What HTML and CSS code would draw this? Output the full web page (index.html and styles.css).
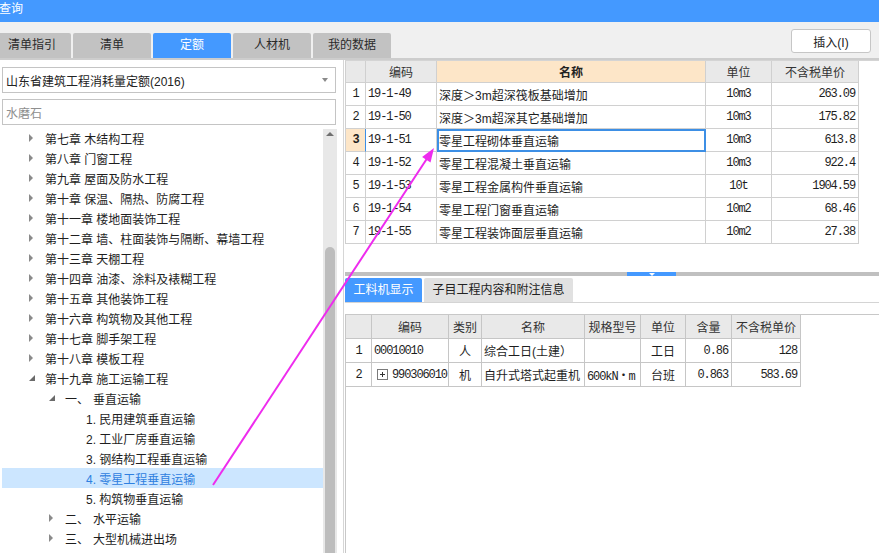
FILE: index.html
```html
<!DOCTYPE html>
<html lang="zh-CN">
<head>
<meta charset="utf-8">
<title>查询</title>
<link rel="stylesheet" href="styles.css">
</head>
<body>
<div class="app">
  <div class="titlebar">查询</div>
  <div class="toolbar">
    <div class="tabs">
      <div class="tab">清单指引</div>
      <div class="tab">清单</div>
      <div class="tab active">定额</div>
      <div class="tab">人材机</div>
      <div class="tab">我的数据</div>
    </div>
    <button class="btn-insert">插入(I)</button>
  </div>
  <div class="main">
    <aside class="left">
      <div class="select"><span>山东省建筑工程消耗量定额(2016)</span><i class="caret"></i></div>
      <div class="search"><span class="placeholder">水磨石</span></div>
      <div class="tree-wrap">
        <div class="tree">
          <div class="node l0"><i class="tg closed"></i><span>第七章 木结构工程</span></div>
          <div class="node l0"><i class="tg closed"></i><span>第八章 门窗工程</span></div>
          <div class="node l0"><i class="tg closed"></i><span>第九章 屋面及防水工程</span></div>
          <div class="node l0"><i class="tg closed"></i><span>第十章 保温、隔热、防腐工程</span></div>
          <div class="node l0"><i class="tg closed"></i><span>第十一章 楼地面装饰工程</span></div>
          <div class="node l0"><i class="tg closed"></i><span>第十二章 墙、柱面装饰与隔断、幕墙工程</span></div>
          <div class="node l0"><i class="tg closed"></i><span>第十三章 天棚工程</span></div>
          <div class="node l0"><i class="tg closed"></i><span>第十四章 油漆、涂料及裱糊工程</span></div>
          <div class="node l0"><i class="tg closed"></i><span>第十五章 其他装饰工程</span></div>
          <div class="node l0"><i class="tg closed"></i><span>第十六章 构筑物及其他工程</span></div>
          <div class="node l0"><i class="tg closed"></i><span>第十七章 脚手架工程</span></div>
          <div class="node l0"><i class="tg closed"></i><span>第十八章 模板工程</span></div>
          <div class="node l0"><i class="tg open"></i><span>第十九章 施工运输工程</span></div>
          <div class="node l1"><i class="tg open"></i><span>一、</span><span class="gap">垂直运输</span></div>
          <div class="node l2"><span>1. 民用建筑垂直运输</span></div>
          <div class="node l2"><span>2. 工业厂房垂直运输</span></div>
          <div class="node l2"><span>3. 钢结构工程垂直运输</span></div>
          <div class="node l2 selected"><span>4. 零星工程垂直运输</span></div>
          <div class="node l2"><span>5. 构筑物垂直运输</span></div>
          <div class="node l1"><i class="tg closed"></i><span>二、</span><span class="gap">水平运输</span></div>
          <div class="node l1"><i class="tg closed"></i><span>三、</span><span class="gap">大型机械进出场</span></div>
        </div>
        <div class="vscroll">
          <div class="sb-up"><i></i></div>
          <div class="sb-thumb"></div>
        </div>
      </div>
    </aside>
    <div class="divider"></div>
    <section class="right">
      <div class="grid-top">
        <div class="tgrid">
          <div class="c h"></div>
          <div class="c h">编码</div>
          <div class="c h hl">名称</div>
          <div class="c h">单位</div>
          <div class="c h">不含税单价</div>

          <div class="c ctr mono">1</div>
          <div class="c mono">19-1-49</div>
          <div class="c">深度＞3m超深筏板基础增加</div>
          <div class="c ctr mono">10m3</div>
          <div class="c rt mono">263.09</div>

          <div class="c ctr mono">2</div>
          <div class="c mono">19-1-50</div>
          <div class="c">深度＞3m超深其它基础增加</div>
          <div class="c ctr mono">10m3</div>
          <div class="c rt mono">175.82</div>

          <div class="c ctr mono cur-num">3</div>
          <div class="c mono">19-1-51</div>
          <div class="c cur-cell">零星工程砌体垂直运输</div>
          <div class="c ctr mono">10m3</div>
          <div class="c rt mono">613.8</div>

          <div class="c ctr mono">4</div>
          <div class="c mono">19-1-52</div>
          <div class="c">零星工程混凝土垂直运输</div>
          <div class="c ctr mono">10m3</div>
          <div class="c rt mono">922.4</div>

          <div class="c ctr mono">5</div>
          <div class="c mono">19-1-53</div>
          <div class="c">零星工程金属构件垂直运输</div>
          <div class="c ctr mono">10t</div>
          <div class="c rt mono">1904.59</div>

          <div class="c ctr mono">6</div>
          <div class="c mono">19-1-54</div>
          <div class="c">零星工程门窗垂直运输</div>
          <div class="c ctr mono">10m2</div>
          <div class="c rt mono">68.46</div>

          <div class="c ctr mono">7</div>
          <div class="c mono">19-1-55</div>
          <div class="c">零星工程装饰面层垂直运输</div>
          <div class="c ctr mono">10m2</div>
          <div class="c rt mono">27.38</div>
        </div>
      </div>
      <div class="splitter"><div class="split-handle"><i></i></div></div>
      <div class="subtabs">
        <div class="subtab active">工料机显示</div>
        <div class="subtab">子目工程内容和附注信息</div>
      </div>
      <div class="grid-bottom">
        <div class="bgrid">
          <div class="c h"></div>
          <div class="c h">编码</div>
          <div class="c h">类别</div>
          <div class="c h">名称</div>
          <div class="c h">规格型号</div>
          <div class="c h">单位</div>
          <div class="c h">含量</div>
          <div class="c h">不含税单价</div>

          <div class="c ctr mono">1</div>
          <div class="c mono">00010010</div>
          <div class="c ctr">人</div>
          <div class="c">综合工日(土建）</div>
          <div class="c"></div>
          <div class="c ctr">工日</div>
          <div class="c rt mono">0.86</div>
          <div class="c rt mono">128</div>

          <div class="c ctr mono">2</div>
          <div class="c mono"><svg class="plus" width="11" height="11" viewBox="0 0 11 11"><rect x="0.5" y="0.5" width="10" height="10" fill="#fff" stroke="#7a7a7a"/><path d="M3 5.5h5M5.5 3v5" stroke="#333" stroke-width="1"/></svg><span>990306010</span></div>
          <div class="c ctr">机</div>
          <div class="c">自升式塔式起重机</div>
          <div class="c mono">600kN・m</div>
          <div class="c ctr">台班</div>
          <div class="c rt mono">0.863</div>
          <div class="c rt mono">583.69</div>
        </div>
      </div>
    </section>
  </div>
  <svg class="annot" width="879" height="553" viewBox="0 0 879 553">
    <line x1="213" y1="485" x2="428" y2="157" stroke="#ee2cee" stroke-width="2"/>
    <polygon points="434,148 430.5,162.4 422.1,157" fill="#ee2cee"/>
  </svg>
</div>
</body>
</html>
```

FILE: styles.css
```css
html, body {
  margin: 0;
  padding: 0;
}
body {
  font-family: "Liberation Sans", "Noto Sans CJK SC", sans-serif;
  font-size: 12px;
  color: #222;
  background: #fff;
}
.app {
  position: relative;
  width: 879px;
  height: 553px;
  overflow: hidden;
  display: flex;
  flex-direction: column;
}

/* title bar */
.titlebar {
  height: 22px;
  line-height: 19px;
  background: #4499ff;
  color: #fff;
  font-size: 12px;
  text-indent: -1px;
  flex: none;
}

/* toolbar / tabs */
.toolbar {
  height: 36px;
  flex: none;
  background: #f0f0f0;
  border-bottom: 2px solid #cdcdcd;
  display: flex;
  align-items: flex-end;
  justify-content: space-between;
}
.tabs {
  display: flex;
  gap: 2px;
  margin-left: -7px;
}
.tab {
  width: 78px;
  height: 25px;
  line-height: 25px;
  text-align: center;
  background: #c2c2c2;
  color: #2a2a2a;
  border-radius: 2px 2px 0 0;
}
.tab.active {
  background: #4499ff;
  color: #fff;
}
.btn-insert {
  align-self: flex-start;
  margin: 7px 8px 0 0;
  width: 80px;
  height: 24px;
  padding: 0;
  font-family: inherit;
  font-size: 12px;
  color: #222;
  background: #fff;
  border: 1px solid #c6c6c6;
  border-radius: 3px;
}

/* main */
.main {
  flex: 1;
  display: flex;
  min-height: 0;
}
.left {
  width: 343px;
  flex: none;
  display: flex;
  flex-direction: column;
  background: #fff;
}
.select, .search {
  box-sizing: border-box;
  width: 334px;
  height: 26px;
  margin-left: 2px;
  border: 1px solid #c4c4c4;
  display: flex;
  align-items: center;
  padding: 0 4px 0 3px;
  flex: none;
}
.select {
  margin-top: 7px;
  justify-content: space-between;
}
.caret {
  width: 0;
  height: 0;
  border-top: 4px solid #8a8a8a;
  border-left: 3px solid transparent;
  border-right: 3px solid transparent;
  margin-right: 3px;
}
.search {
  margin-top: 6px;
}
.placeholder {
  color: #8f8f8f;
}

.tree-wrap {
  flex: 1;
  min-height: 0;
  display: flex;
  margin-top: 2px;
}
.tree {
  flex: 1;
  margin-left: 2px;
  padding-top: 1px;
}
.node {
  height: 20px;
  display: flex;
  align-items: center;
  white-space: nowrap;
  color: #1e1e1e;
}
.node.l0 { padding-left: 27px; }
.node.l1 { padding-left: 47px; }
.node.l2 { padding-left: 84px; }
.node.selected {
  background: #cce6ff;
  color: #2f80e0;
}
.tg {
  width: 16px;
  height: 20px;
  flex: none;
  display: flex;
  align-items: center;
}
.tg.closed::before {
  content: "";
  width: 0;
  height: 0;
  border-left: 4px solid #8a8a8a;
  border-top: 4px solid transparent;
  border-bottom: 4px solid transparent;
}
.tg.open::before {
  content: "";
  width: 0;
  height: 0;
  border-right: 6px solid #6a6a6a;
  border-top: 6px solid transparent;
}
.gap {
  margin-left: 4px;
}

.vscroll {
  width: 14px;
  flex: none;
  margin: 2px 6px 0 0;
  background: #e8e8e8;
  display: flex;
  flex-direction: column;
}
.sb-up {
  height: 10px;
  display: flex;
  align-items: center;
  justify-content: center;
}
.sb-up i {
  width: 0;
  height: 0;
  border-bottom: 4px solid #707070;
  border-left: 4px solid transparent;
  border-right: 4px solid transparent;
}
.sb-thumb {
  flex: 1;
  margin: 108px 2px 0;
  background: #bdbdbd;
  border-radius: 5px 5px 0 0;
}

.divider {
  width: 1px;
  flex: none;
  background: #d6d6d6;
  margin-right: 1px;
}

/* right */
.right {
  flex: 1;
  display: flex;
  flex-direction: column;
  min-width: 0;
}
.grid-top {
  height: 212px;
  box-sizing: border-box;
  border-top: 1px solid #d4d4d4;
  flex: none;
}
.tgrid {
  display: grid;
  width: max-content;
  grid-template-columns: 20px 71px 269px 66px 87px;
  grid-template-rows: 22px;
  grid-auto-rows: 23px;
  border-left: 1px solid #d0d0d0;
}
.c {
  box-sizing: border-box;
  border-right: 1px solid #d0d0d0;
  border-bottom: 1px solid #d0d0d0;
  display: flex;
  align-items: center;
  padding: 0 2px;
  white-space: nowrap;
  overflow: hidden;
  color: #1e1e1e;
}
.c.h {
  background: #e9e9e9;
  justify-content: center;
  color: #333;
}
.c.h.hl {
  background: #fde6c8;
  font-weight: bold;
  color: #222;
}
.c.ctr { justify-content: center; }
.c.rt { justify-content: flex-end; padding-right: 3px; }
.mono {
  font-family: "Liberation Mono", "Noto Sans CJK SC", monospace;
  font-size: 12px;
  letter-spacing: -1.1px;
}
.c.cur-num {
  background: #fde6c8;
  font-weight: bold;
  border-right-color: #3d8fe5;
}
.c.cur-cell {
  outline: 2px solid #3d8fe5;
  outline-offset: -2px;
}

.splitter {
  height: 4px;
  flex: none;
  background: #c0c0c0;
  display: flex;
}
.split-handle {
  margin-left: 282px;
  width: 49px;
  background: #4499ff;
  display: flex;
  align-items: center;
  justify-content: center;
}
.split-handle i {
  width: 0;
  height: 0;
  border-top: 3px solid #fff;
  border-left: 3px solid transparent;
  border-right: 3px solid transparent;
}

.subtabs {
  margin-top: 2px;
  height: 25px;
  box-sizing: border-box;
  border-bottom: 1px solid #d4d4d4;
  display: flex;
  gap: 2px;
  flex: none;
}
.subtab {
  height: 24px;
  line-height: 24px;
  padding: 0;
  text-align: center;
  background: #e1e1e1;
  color: #222;
  border-radius: 2px 2px 0 0;
  width: 149px;
}
.subtab.active {
  width: 77px;
  background: #4499ff;
  color: #fff;
}

.grid-bottom {
  flex: 1;
  margin-top: 11px;
  border-top: 1px solid #c8c8c8;
  border-left: 1px solid #c8c8c8;
}
.bgrid {
  display: grid;
  width: max-content;
  grid-template-columns: 26px 77px 33px 103px 56px 45px 46px 69px;
  grid-auto-rows: 24px;
}
.bgrid .c {
  border-color: #c6c6c6;
}
.plus {
  flex: none;
  margin: 0 4px 0 3px;
}

.annot {
  position: absolute;
  left: 0;
  top: 0;
  pointer-events: none;
}
```
